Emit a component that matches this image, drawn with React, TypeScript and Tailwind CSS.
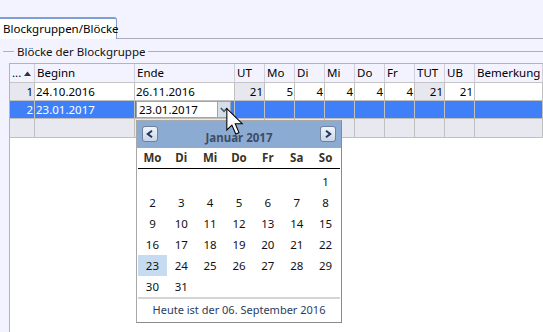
import React from 'react';

const cols = 'grid-cols-[25px_100px_100px_30px_30px_30px_30px_30px_30px_30px_30px_1fr]';

const headers = ['', 'Beginn', 'Ende', 'UT', 'Mo', 'Di', 'Mi', 'Do', 'Fr', 'TUT', 'UB', 'Bemerkung'];

interface Cell {
  text: string;
  right?: boolean;
  gray?: boolean;
}

const row1: Cell[] = [
  { text: '1', right: true, gray: true },
  { text: '24.10.2016' },
  { text: '26.11.2016' },
  { text: '21', right: true, gray: true },
  { text: '5', right: true },
  { text: '4', right: true },
  { text: '4', right: true },
  { text: '4', right: true },
  { text: '4', right: true },
  { text: '21', right: true, gray: true },
  { text: '21', right: true },
  { text: '' },
];

const dayNames = ['Mo', 'Di', 'Mi', 'Do', 'Fr', 'Sa', 'So'];

// Januar 2017 beginnt am Sonntag
const days: (number | null)[] = [null, null, null, null, null, null, ...Array.from({ length: 31 }, (_, i) => i + 1)];

const NavButton = ({ dir }: { dir: 'left' | 'right' }) => (
  <div className="w-4 h-4 rounded-[3px] border border-[#6f819c] bg-gradient-to-b from-[#f2f6fb] to-[#c9d5e5] flex items-center justify-center">
    <svg width="8" height="8" viewBox="0 0 8 8">
      {dir === 'left' ? (
        <path d="M6 0.8 L1.8 4 L6 7.2" stroke="#1d3560" strokeWidth="2" fill="none" />
      ) : (
        <path d="M2 0.8 L6.2 4 L2 7.2" stroke="#1d3560" strokeWidth="2" fill="none" />
      )}
    </svg>
  </div>
);

const Calendar = () => {
  return (
    <div className="absolute left-[136px] top-[120px] w-[206px] h-[203px] bg-white border border-[#a8a8a8] border-b-[#8a8a8a] border-r-[#8a8a8a] flex flex-col">
      {/* Kopf */}
      <div className="h-[27px] bg-[#8cabd2] flex items-center justify-between px-[5px]">
        <NavButton dir="left" />
        <div className="text-[11.5px] font-bold text-[#3d4b66] pt-[6px]">Januar 2017</div>
        <NavButton dir="right" />
      </div>
      {/* Wochentage */}
      <div className="grid grid-cols-7 h-[22px] items-center border-b border-black mx-px">
        {dayNames.map((d) => (
          <div key={d} className="text-center text-[11.5px] font-bold text-[#3b3226]">
            {d}
          </div>
        ))}
      </div>
      {/* Tage */}
      <div className="grid grid-cols-7 auto-rows-[21px] pt-[2px] mx-px">
        {days.map((d, i) => (
          <div
            key={i}
            className={
              'flex items-center justify-center text-[11.5px] text-[#111] ' + (d === 23 ? 'bg-[#c6dbef]' : '')
            }
          >
            {d ?? ''}
          </div>
        ))}
      </div>
      <div className="flex-1" />
      {/* Fuss */}
      <div className="border-t-2 border-[#d4d4d4] mx-px h-[25px] flex items-center justify-center text-[11px] text-[#2a3d5c]">
        Heute ist der 06. September 2016
      </div>
    </div>
  );
};

const Cursor = () => (
  <svg className="absolute left-[226px] top-[108px]" width="19" height="28" viewBox="0 0 14 21">
    <path
      d="M0.5 0.5 L0.5 16.5 L4.3 12.8 L7.2 19.5 L9.6 18.5 L6.8 11.8 L12 11.8 Z"
      fill="white"
      stroke="black"
      strokeWidth="0.8"
      strokeLinejoin="miter"
    />
  </svg>
);

const App = () => {
  return (
    <div
      className="relative w-[543px] h-[332px] overflow-hidden bg-[#f3f3ff] text-[11px] text-black"
      style={{ fontFamily: '"Noto Sans", "DejaVu Sans", sans-serif' }}
    >
      {/* Reiter */}
      <div className="h-[39px] pt-[17px] border-b border-[#a9a9b8] flex">
        <div className="w-[117px] h-[22px] bg-white border-t-2 border-r border-[#7f9fd4] rounded-tr-[3px] pl-[3px] leading-[19px] text-[11.5px]">
          Blockgruppen/Blöcke
        </div>
      </div>

      {/* Gruppenrahmen */}
      <div className="flex items-center h-[24px] pt-px">
        <div className="w-[11px] h-px bg-[#b0b0b8] ml-[3px]" />
        <div className="px-[3px] text-[#111] text-[11.5px]">Blöcke der Blockgruppe</div>
        <div className="flex-1 h-px bg-[#b0b0b8]" />
      </div>

      {/* Tabelle */}
      <div className="ml-[9px] h-[300px] bg-white border-l border-t border-[#b4b4b4] text-[11.5px]">
        {/* Kopfzeile */}
        <div className={`grid ${cols} h-[19px] bg-[#f3f3ff] border-b border-[#c4c4c4]`}>
          {headers.map((h, i) => (
            <div key={i} className="border-r border-[#d0d0dc] pl-[2px] leading-[18px] whitespace-nowrap overflow-hidden">
              {i === 0 ? (
                <span className="flex items-center gap-[3px]">
                  <span>...</span>
                  <svg width="7" height="5" viewBox="0 0 7 5">
                    <path d="M0 5 L3.5 0.5 L7 5 Z" fill="#333" />
                  </svg>
                </span>
              ) : (
                h
              )}
            </div>
          ))}
        </div>

        {/* Zeile 1 */}
        <div className={`grid ${cols} h-[18px]`}>
          {row1.map((c, i) => (
            <div
              key={i}
              className={
                'border-r border-b border-[#c0c0c0] leading-[17px] px-[1px] ' +
                (c.right ? 'text-right ' : 'text-left ') +
                (c.gray ? 'bg-[#e7e7ef]' : 'bg-white')
              }
            >
              {c.text}
            </div>
          ))}
        </div>

        {/* Zeile 2, ausgewählt */}
        <div className={`grid ${cols} h-[18px] bg-[#3f80f8] text-white`}>
          <div className="border-r border-b border-[#c0c0c0] text-right px-[1px] leading-[17px]">2</div>
          <div className="border-r border-b border-[#c0c0c0] px-[1px] leading-[17px]">23.01.2017</div>
          <div className="border-r border-b border-[#c0c0c0] flex pl-[1px] pr-[3px]">
            <div className="flex-1 bg-white text-black border border-[#9aa6b8] leading-[15px] pl-[2px]">23.01.2017</div>
            <div className="w-[13px] bg-[#d6deea] border border-l-0 border-[#9aa6b8] flex items-center justify-center">
              <svg width="8" height="6" viewBox="0 0 8 6">
                <path d="M0.8 1 L4 4.4 L7.2 1" stroke="#4d5a6c" strokeWidth="1.6" fill="none" />
              </svg>
            </div>
          </div>
          {Array.from({ length: 9 }).map((_, i) => (
            <div key={i} className="border-r border-b border-[#c0c0c0]" />
          ))}
        </div>

        {/* Zeile 3, leer */}
        <div className={`grid ${cols} h-[19px] bg-[#e8e8f1]`}>
          {headers.map((_, i) => (
            <div key={i} className="border-r border-b border-[#c0c0c0]" />
          ))}
        </div>
      </div>

      <Calendar />
      <Cursor />
    </div>
  );
};

export default App;
